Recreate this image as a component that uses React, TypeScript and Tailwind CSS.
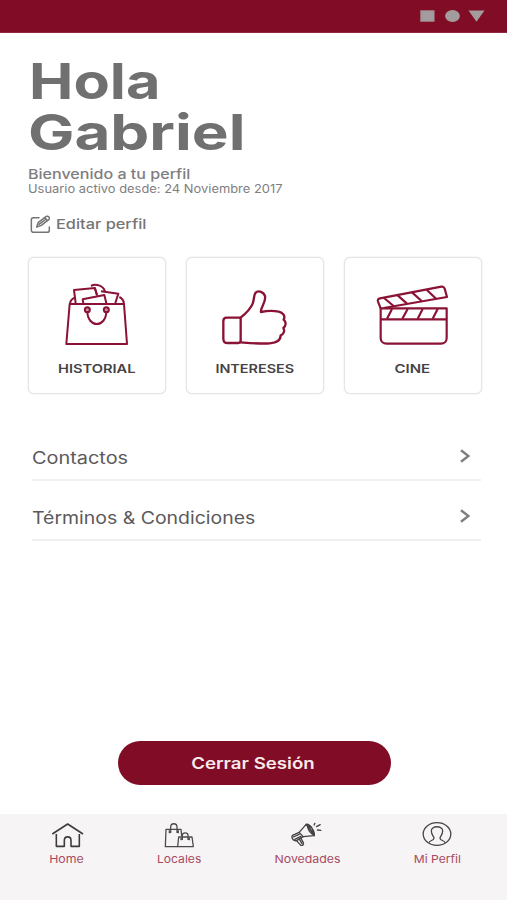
import type { ReactNode } from "react";

function StatusBar() {
  return (
    <header className="flex h-[33px] shrink-0 items-center justify-end border-b border-[#8f2a42] bg-[#800c25] pr-[22px]">
      <svg viewBox="0 0 66 12" className="h-3 w-[66px] fill-[#a39b9c]">
        <rect x="1.3" y="0.3" width="14.2" height="11.4" />
        <ellipse cx="33.5" cy="6" rx="7.4" ry="6" />
        <path d="M49.5 0.5h16L57.5 11.7z" />
      </svg>
    </header>
  );
}

function BagIcon() {
  return (
    <svg viewBox="114 81 234 234" className="size-[78px] fill-none stroke-[#8a1234] stroke-[6]" strokeLinejoin="round">
      <path d="M149 162H312L321 282H139z" />
      <path d="M150 161c1-8 5-14 14-18M312 161c-1-9-5-16-14-20" />
      <path d="M167 159l-5-39 63-6 6 22M190 159l-2-11 65-13 6 25" />
      <path d="M224 114l7 21M243 124l52 7-9 28M213 108c13-7 36-3 42 16" />
      <circle cx="202" cy="179" r="7.5" fill="#8a1234" fillOpacity="0.45" />
      <circle cx="259" cy="179" r="7.5" fill="#8a1234" fillOpacity="0.45" />
      <path d="M202 183c0 52 57 52 57 0" />
    </svg>
  );
}

function ThumbIcon() {
  return (
    <svg
      viewBox="114 81 234 234"
      className="size-[78px] fill-none stroke-[#8a1234] stroke-[7]"
      strokeLinejoin="round"
      strokeLinecap="round"
    >
      <path d="M188 203h-42c-7 0-10 4-10 10v53c0 8 5 13 13 13h32c5 0 7-3 7-8z" />
      <path d="M188 203c16-13 30-27 36-42 5-13 3-27 9-33 8-8 25-2 28 11 4 18-15 34-12 47 15-3 38-4 53-1 13 3 21 13 15 24 8 7 8 18-1 25 5 9 1 19-8 22 0 17-16 23-33 24-27 2-60-1-87-3" />
    </svg>
  );
}

function ClapperIcon() {
  return (
    <svg viewBox="114 81 234 234" className="size-[78px] fill-none stroke-[#8a1234] stroke-[6.5]" strokeLinejoin="round">
      <path d="M134 175H332V264c0 10-7 17-17 17H152c-11 0-18-7-18-17zM134 208H332" />
      <path d="M134 175l-8-20c-2-6 1-9 6-10L316 110c5-1 8 1 10 6l7 25L143 174" />
      <path d="M144 144l29 24M185 136l28 25M228 127l29 26M272 119l29 28" />
      <path d="M168 177l-15 29M215 177l-16 29M260 177l-15 29M305 177l-15 29" />
    </svg>
  );
}

function Card({ icon, children }: { icon: ReactNode; children: ReactNode }) {
  return (
    <button className="flex h-[137px] w-[137.5px] flex-col items-center rounded-md border-[1.5px] border-[#e6e5e6] bg-white pt-[19px] shadow-[0_0_1.5px_#dddcdd]">
      {icon}
      <span className="mt-[6px] text-xs leading-4 font-semibold text-[#454345]">{children}</span>
    </button>
  );
}

function ListRow({ children }: { children: ReactNode }) {
  return (
    <a className="flex h-[60px] items-center justify-between border-b-2 border-[#f0f0f0] pt-4 pr-[11px] text-[17px] leading-6 text-[#5b595b]">
      {children}
      <svg viewBox="0 0 10 14" className="mb-[4px] h-3.5 w-2.5 fill-none stroke-[#7f7f7f] stroke-[2.4]">
        <path d="M1 1.2L8.4 7L1 12.8" />
      </svg>
    </a>
  );
}

function HomeIcon() {
  return (
    <svg viewBox="60 45 102 84" className="h-7 w-[34px] fill-none stroke-[#3d3b3d] stroke-[4.8]" strokeLinejoin="round">
      <path d="M67 87L113 57L159 87" />
      <path d="M79 87V124H103V106c0-14 20-14 20 0V124H148V87" />
    </svg>
  );
}

function ShopsIcon() {
  return (
    <svg viewBox="396 45 102 84" className="h-7 w-[34px] fill-none stroke-[#4b494b] stroke-[3.8]" strokeLinejoin="round">
      <path d="M443 125H406l2-52h45l2 20" />
      <path d="M422 84V66c0-13 19-13 19 0V84M418 76v9M445 76v9" />
      <path d="M443 125l3-29h40l4 29z" />
      <path d="M457 105V91c0-10 17-10 17 0v14M453 98v8M478 98v8" />
    </svg>
  );
}

function MegaphoneIcon() {
  return (
    <svg
      viewBox="91.5 45 102 84"
      className="h-7 w-[34px] fill-none stroke-[#444244] stroke-[4]"
      strokeLinejoin="round"
      strokeLinecap="round"
    >
      <path d="M96 91l20-9 21-24 24 34-33 3-20 12c-9 2-17-9-12-16z" />
      <path d="M116 82l12 13M98 96l18-8M103 103l18-9" />
      <path d="M108 107l13 14c6 1 10-3 7-9l-7-13M117 103l7 12" />
      <path d="M137 58c10-3 28 22 24 34M143 61l16 26M141 60c-1 12 9 27 20 30M147 64l6 2 6 15" />
      <path d="M161 60l2-5M168 65l11-6M171 75l10 1" />
    </svg>
  );
}

function ProfileIcon() {
  return (
    <svg viewBox="480 45 102 84" className="h-7 w-[34px] fill-none stroke-[#444244] stroke-[3.8]">
      <ellipse cx="531" cy="87" rx="41.5" ry="34" />
      <path d="M507 113c2-8 13-5 15-13 1-5-8-10-8-22 0-17 34-17 34 0 0 12-9 17-8 22 2 8 13 5 15 13" />
    </svg>
  );
}

function NavItem({ width, icon, children }: { width: string; icon: ReactNode; children: ReactNode }) {
  return (
    <a className={`flex flex-col items-center ${width}`}>
      {icon}
      <span className="mt-1 text-[11px] leading-[14px] text-[#a84a62]">{children}</span>
    </a>
  );
}

export default function App() {
  return (
    <div className="flex h-[900px] w-[507px] flex-col overflow-hidden bg-white font-['Inter','Open_Sans',sans-serif] whitespace-nowrap">
      <StatusBar />
      <main className="flex flex-1 flex-col">
        <h1 className="flex flex-col pt-[23px] pl-7 text-[49.5px] leading-[50.5px] font-bold text-[#717071]">
          <span className="ml-px origin-left scale-x-[1.2]">Hola</span>
          <span className="origin-left scale-x-[1.25]">Gabriel</span>
        </h1>
        <div className="flex flex-col pt-[9px] pl-[27.5px] text-[#7f7e7f]">
          <p className="origin-left scale-x-[1.19] text-[13.5px] leading-4 font-medium">Bienvenido a tu perfil</p>
          <p className="origin-left scale-x-[1.122] text-[11.5px] leading-[14px]">
            Usuario activo desde: 24 Noviembre 2017
          </p>
        </div>
        <button className="mt-[18px] ml-[29.5px] flex h-5 items-center gap-1.5 text-[#757475]">
          <svg
            viewBox="0 0 62 54"
            className="h-[18px] w-[20.7px] fill-none stroke-[#757475] stroke-[4.5]"
            strokeLinejoin="round"
            strokeLinecap="round"
          >
            <path d="M27 8H10c-4 0-6 2-6 6v32c0 4 2 6 6 6h42c4 0 6-2 6-6V36" />
            <path d="M20 36l5-14L49 4c6-2 12 4 8 9L34 31z" />
            <path d="M27 28L47 13M43 8l9 8" />
          </svg>
          <span className="origin-left scale-x-[1.21] text-[13.5px] font-medium">Editar perfil</span>
        </button>
        <section className="mt-[23px] flex gap-[20.5px] pl-7">
          <Card icon={<BagIcon />}>
            <span className="inline-block scale-x-[1.22]">HISTORIAL</span>
          </Card>
          <Card icon={<ThumbIcon />}>
            <span className="inline-block scale-x-[1.2]">INTERESES</span>
          </Card>
          <Card icon={<ClapperIcon />}>
            <span className="mr-px inline-block scale-x-[1.25]">CINE</span>
          </Card>
        </section>
        <nav className="mt-[27px] mr-[26px] ml-8 flex flex-col">
          <ListRow>
            <span className="origin-left scale-x-[1.17]">Contactos</span>
          </ListRow>
          <ListRow>
            <span className="origin-left scale-x-[1.145]">Términos &amp; Condiciones</span>
          </ListRow>
        </nav>
        <button className="mt-auto mb-[29px] ml-[118px] flex h-11 w-[273px] items-center justify-center rounded-full bg-[#800c25] text-base font-semibold text-[#f8e9ec]">
          <span className="mr-[3px] scale-x-[1.165]">Cerrar Sesión</span>
        </button>
      </main>
      <footer className="flex h-[86px] shrink-0 bg-[#f7f4f5] pt-1.5">
        <NavItem width="w-[134px]" icon={<HomeIcon />}>
          <span className="mr-px inline-block scale-x-[1.12]">Home</span>
        </NavItem>
        <NavItem width="w-[90px]" icon={<ShopsIcon />}>
          <span className="inline-block scale-x-[1.1]">Locales</span>
        </NavItem>
        <NavItem width="w-[167px]" icon={<MegaphoneIcon />}>
          <span className="inline-block scale-x-[1.12]">Novedades</span>
        </NavItem>
        <NavItem width="w-[92px]" icon={<ProfileIcon />}>
          <span className="inline-block scale-x-[1.1]">Mi Perfil</span>
        </NavItem>
      </footer>
    </div>
  );
}
